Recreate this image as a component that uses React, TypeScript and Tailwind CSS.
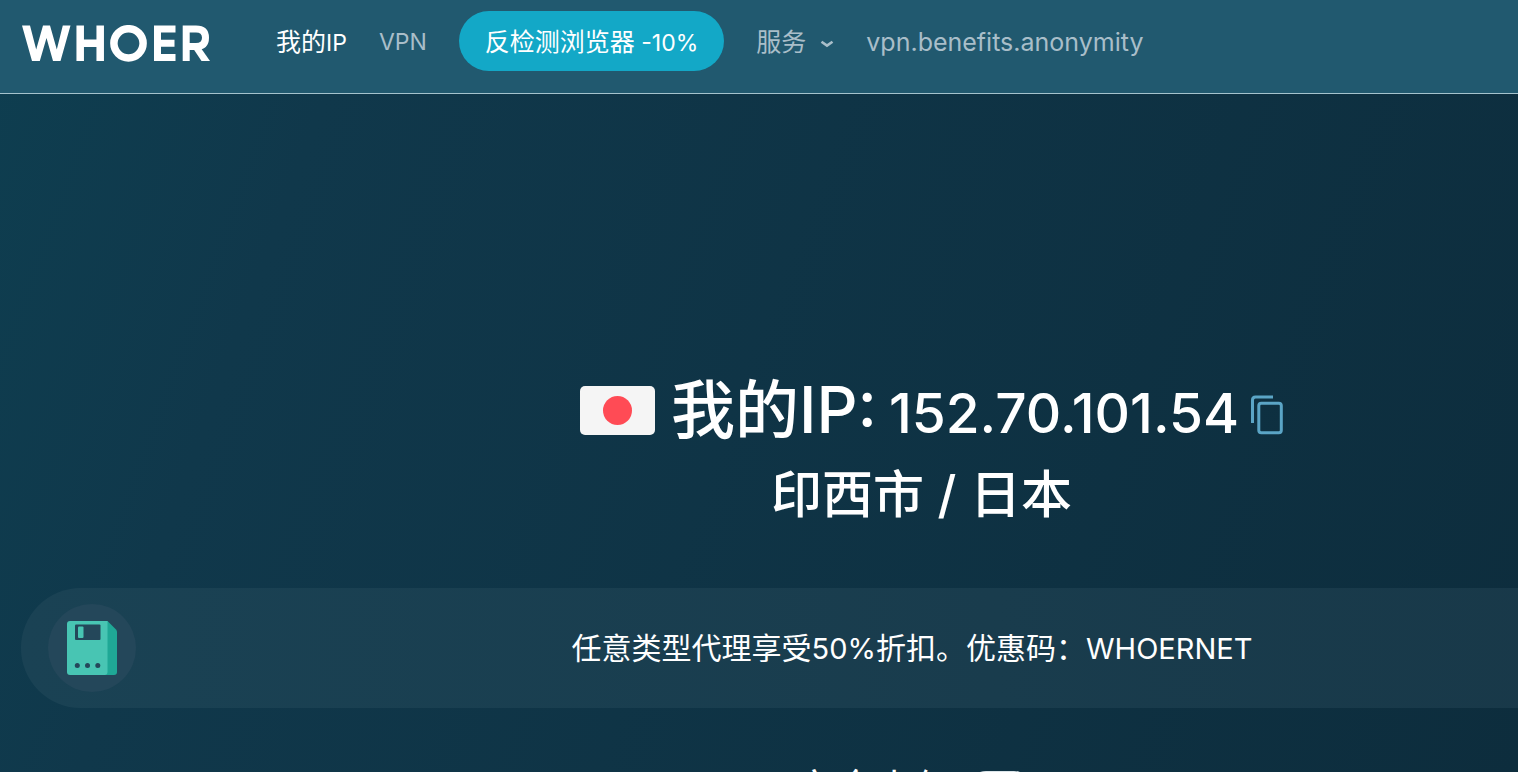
const baseFont = "font-['Inter','Noto_Sans_CJK_SC',sans-serif]";

const Logo = () => (
  <svg viewBox="0 0 188 37" className="h-[37px] w-[188px]" fill="none" stroke="#fff" strokeWidth="7.5">
    <path
      d="M0 .5H8L14.200 24.500 21 .5H28L34.800 24.500 40.800 .5H48.500L38.500 36H31L24.500 13 17.800 36H10Z"
      fill="#fff"
      stroke="none"
    />
    <path d="M58.200 .5V36M78.200 .5V36M58 18.200H78" />
    <circle cx="106.500" cy="18.300" r="14.600" />
    <path d="M153.500 4H135.500V32.500H153.500M136 18.200H152.500" strokeWidth="7" />
    <path d="M164.200 36V4H174Q183.500 4 183.500 12.700T174 21.500H165" strokeWidth="7" />
    <path d="M170.500 22.500H178.500L188 36H179.500Z" fill="#fff" stroke="none" />
  </svg>
);

const ChevronIcon = () => (
  <svg viewBox="0 0 14 8" className="mt-1 h-2 w-3.5" fill="none" stroke="currentColor" strokeWidth="2.600">
    <path d="M1.500 1.800L7 5.600L12.500 1.800" />
  </svg>
);

const JapanFlag = () => (
  <svg viewBox="0 0 75 49" className="h-[49px] w-[75px]">
    <rect width="75" height="49" rx="5" fill="#f5f5f5" />
    <circle cx="37.500" cy="24.500" r="14.500" fill="#ff4b55" />
  </svg>
);

const CopyIcon = () => (
  <svg viewBox="0 0 32 40" className="h-10 w-8" fill="none" stroke="#5ba5c6" strokeWidth="3">
    <path d="M22 2H4.500Q1.500 2 1.500 5V28" />
    <rect x="7.800" y="8.300" width="22.500" height="29.500" rx="2.500" />
  </svg>
);

const FloppyIcon = () => (
  <svg viewBox="0 0 50 54" className="h-[54px] w-[50px]">
    <path d="M36 0h4.500L49 8.500q1 1 1 2.500v40q0 3-3 3H36z" fill="#1fa896" />
    <path d="M3 0h37.500v51q0 3-3 3H3q-3 0-3-3V3q0-3 3-3z" fill="#48c5b3" />
    <rect x="8" y="3.500" width="25.500" height="15.500" rx="1" fill="#24475a" />
    <rect x="11" y="5.500" width="5.500" height="11.500" rx="1" fill="#48c5b3" />
    <circle cx="10.300" cy="44.600" r="2.500" fill="#24475a" />
    <circle cx="20.500" cy="44.600" r="2.500" fill="#24475a" />
    <circle cx="30.800" cy="44.600" r="2.500" fill="#24475a" />
  </svg>
);

const Header = () => (
  <header className="flex h-[94px] items-start border-b border-[#a5c3cd] bg-[#21596f] px-[22px] pt-[11px]">
    <a href="#" aria-label="WHOER" className="mr-[66px] flex h-16 items-center">
      <Logo />
    </a>
    <nav className="flex gap-8 text-[25px] leading-[62px] whitespace-nowrap text-[#a9bec9]">
      <a href="#" className="text-white">
        我的<span className="text-[23px]">IP</span>
      </a>
      <a href="#" className="text-[23px]">
        VPN
      </a>
      <a href="#" className="h-[60px] rounded-full bg-[#13a8c7] px-[26px] text-white">
        反检测浏览器<span className="text-[23px]"> -10%</span>
      </a>
      <button type="button" className="flex h-[62px] items-center gap-3.5">
        服务
        <ChevronIcon />
      </button>
      <a href="#">vpn.benefits.anonymity</a>
    </nav>
  </header>
);

const MyIp = () => (
  <section className="flex flex-col items-center font-medium text-white">
    <div className="flex h-[90px] items-center pl-5">
      <div className="pb-0.5">
        <JapanFlag />
      </div>
      <h1 className="ml-4 flex items-baseline gap-3 text-[64px] leading-[90px]">
        <span>我的IP:</span>
        <span className="text-[55px]">152.70.101.54</span>
      </h1>
      <button type="button" aria-label="复制" className="ml-3 pt-2">
        <CopyIcon />
      </button>
    </div>
    <h2 className="text-[51px] leading-[78px]">印西市 / 日本</h2>
  </section>
);

const PromoBanner = () => (
  <a
    href="#"
    className="mt-[54px] flex h-[120px] items-center rounded-full bg-linear-to-r from-[#1a4254] to-[#183747] pr-[46px] pl-[27px] text-white"
  >
    <span className="flex size-[88px] items-center justify-center rounded-full bg-[#24475a]">
      <FloppyIcon />
    </span>
    <span className="flex-1 text-center text-[30px]">
      任意类型代理享受<span className="text-[29px]">50%</span>折扣。优惠码：
      <span className="text-[29px]">WHOERNET</span>
    </span>
    <span className="size-[88px]" />
  </a>
);

export default function App() {
  return (
    <div
      className={`h-screen overflow-hidden bg-linear-[110deg] from-[#0e3e50] via-[#10384b] via-20% to-[#0d2d3d] ${baseFont}`}
    >
      <Header />
      {/* the content column is wider than the viewport and runs off the right edge */}
      <main className="w-[calc(100%+325px)] px-[21px] pt-[272px]">
        <MyIp />
        <PromoBanner />
        <div className="mt-[53px] flex items-center justify-center gap-3 pr-4 text-white">
          <label htmlFor="safe" className="text-[40px] leading-[56px]">
            安全上级
          </label>
          <input id="safe" type="checkbox" className="h-9 w-16 appearance-none rounded-full bg-[#dbe5e9]" />
        </div>
      </main>
    </div>
  );
}
